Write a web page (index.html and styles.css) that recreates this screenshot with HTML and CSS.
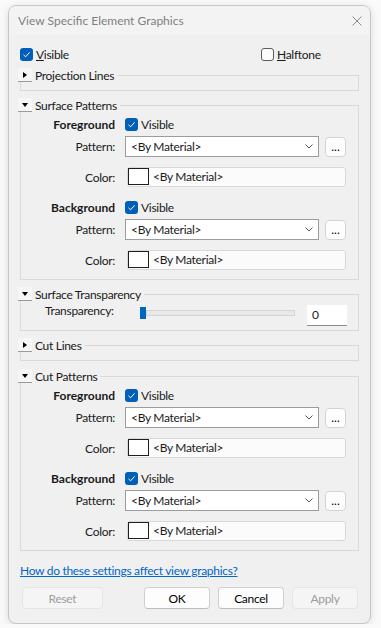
FILE: index.html
```html
<!DOCTYPE html>
<html lang="en">

<head>
    <meta charset="UTF-8">
    <meta name="viewport" content="width=device-width, initial-scale=1.0">
    <title>View Specific Element Graphics</title>
    <link rel="stylesheet" href="styles.css">
</head>

<body>
    <div class="dialog">
        <div class="titlebar">
            <span class="title">View Specific Element Graphics</span>
            <svg class="close" width="10" height="10" viewBox="0 0 10 10">
                <path d="M0.5 0.5 L9.5 9.5 M9.5 0.5 L0.5 9.5" stroke="#8a8a8a" stroke-width="1" fill="none"/>
            </svg>
        </div>

        <div class="dialog-body">
            <!-- Top visibility options -->
            <div class="top-row">
                <label class="check">
                    <span class="box checked"><svg width="13" height="13" viewBox="0 0 13 13"><path d="M3.5 6.8 L5.6 8.8 L9.6 4.3" stroke="#fff" stroke-width="1" fill="none"/></svg></span>
                    <span><u>V</u>isible</span>
                </label>
                <label class="check">
                    <span class="box"></span>
                    <span><u>H</u>alftone</span>
                </label>
            </div>

            <div class="group collapsed first">
                <div class="group-head"><span class="toggle"><span class="tri-right"></span></span>Projection Lines</div>
            </div>

            <div class="group">
                <div class="group-head"><span class="toggle"><span class="tri-down"></span></span>Surface Patterns</div>
                <div class="field-row head-row">
                    <span class="field-label bold">Foreground</span>
                    <label class="check">
                        <span class="box checked"><svg width="13" height="13" viewBox="0 0 13 13"><path d="M3.5 6.8 L5.6 8.8 L9.6 4.3" stroke="#fff" stroke-width="1" fill="none"/></svg></span>
                        <span>Visible</span>
                    </label>
                </div>
                <div class="field-row pattern-row">
                    <span class="field-label">Pattern:</span>
                    <div class="combo"><span>&lt;By Material&gt;</span><svg width="8" height="5" viewBox="0 0 8 5"><path d="M0.5 0.5 L4 4 L7.5 0.5" stroke="#555" stroke-width="1" fill="none"/></svg></div>
                    <button class="dots">...</button>
                </div>
                <div class="field-row color-row">
                    <span class="field-label">Color:</span>
                    <div class="color-field"><span class="swatch"></span><span>&lt;By Material&gt;</span></div>
                </div>
                <div class="field-row head-row second">
                    <span class="field-label bold">Background</span>
                    <label class="check">
                        <span class="box checked"><svg width="13" height="13" viewBox="0 0 13 13"><path d="M3.5 6.8 L5.6 8.8 L9.6 4.3" stroke="#fff" stroke-width="1" fill="none"/></svg></span>
                        <span>Visible</span>
                    </label>
                </div>
                <div class="field-row pattern-row">
                    <span class="field-label">Pattern:</span>
                    <div class="combo"><span>&lt;By Material&gt;</span><svg width="8" height="5" viewBox="0 0 8 5"><path d="M0.5 0.5 L4 4 L7.5 0.5" stroke="#555" stroke-width="1" fill="none"/></svg></div>
                    <button class="dots">...</button>
                </div>
                <div class="field-row color-row">
                    <span class="field-label">Color:</span>
                    <div class="color-field"><span class="swatch"></span><span>&lt;By Material&gt;</span></div>
                </div>
            </div>

            <div class="group transparency">
                <div class="group-head"><span class="toggle"><span class="tri-down"></span></span>Surface Transparency</div>
                <div class="trans-row">
                    <span class="trans-label">Transparency:</span>
                    <div class="slider"><span class="thumb"></span><span class="track"></span></div>
                    <div class="number">0</div>
                </div>
            </div>

            <div class="group collapsed">
                <div class="group-head"><span class="toggle"><span class="tri-right"></span></span>Cut Lines</div>
            </div>

            <div class="group cut">
                <div class="group-head"><span class="toggle"><span class="tri-down"></span></span>Cut Patterns</div>
                <div class="field-row head-row">
                    <span class="field-label bold">Foreground</span>
                    <label class="check">
                        <span class="box checked"><svg width="13" height="13" viewBox="0 0 13 13"><path d="M3.5 6.8 L5.6 8.8 L9.6 4.3" stroke="#fff" stroke-width="1" fill="none"/></svg></span>
                        <span>Visible</span>
                    </label>
                </div>
                <div class="field-row pattern-row">
                    <span class="field-label">Pattern:</span>
                    <div class="combo"><span>&lt;By Material&gt;</span><svg width="8" height="5" viewBox="0 0 8 5"><path d="M0.5 0.5 L4 4 L7.5 0.5" stroke="#555" stroke-width="1" fill="none"/></svg></div>
                    <button class="dots">...</button>
                </div>
                <div class="field-row color-row">
                    <span class="field-label">Color:</span>
                    <div class="color-field"><span class="swatch"></span><span>&lt;By Material&gt;</span></div>
                </div>
                <div class="field-row head-row second">
                    <span class="field-label bold">Background</span>
                    <label class="check">
                        <span class="box checked"><svg width="13" height="13" viewBox="0 0 13 13"><path d="M3.5 6.8 L5.6 8.8 L9.6 4.3" stroke="#fff" stroke-width="1" fill="none"/></svg></span>
                        <span>Visible</span>
                    </label>
                </div>
                <div class="field-row pattern-row">
                    <span class="field-label">Pattern:</span>
                    <div class="combo"><span>&lt;By Material&gt;</span><svg width="8" height="5" viewBox="0 0 8 5"><path d="M0.5 0.5 L4 4 L7.5 0.5" stroke="#555" stroke-width="1" fill="none"/></svg></div>
                    <button class="dots">...</button>
                </div>
                <div class="field-row color-row">
                    <span class="field-label">Color:</span>
                    <div class="color-field"><span class="swatch"></span><span>&lt;By Material&gt;</span></div>
                </div>
            </div>

            <a class="help-link" href="#">How do these settings affect view graphics?</a>

            <div class="button-row">
                <button class="btn disabled reset">Reset</button>
                <button class="btn ok">OK</button>
                <button class="btn">Cancel</button>
                <button class="btn disabled">Apply</button>
            </div>
        </div>
    </div>
</body>

</html>
```

FILE: styles.css
```css
/* Variables */
:root {
    --dialog-bg: #f0f0f0;
    --title-bg: #f3f3f3;
    --text-color: #1a1a1a;
    --group-line: #d9d9d9;
    --accent: #005fb8;
    --link-color: #0066cc;
}

/* Global Styles */
body {
    margin: 0;
    background: #fafafa;
    font-family: Lato, "Noto Sans", sans-serif;
    font-size: 12px;
    color: var(--text-color);
}

.dialog {
    width: 363px;
    height: 619px;
    margin: 5px 0 0 8px;
    box-sizing: border-box;
    border: 1px solid #c6c6c6;
    border-radius: 8px;
    background: var(--dialog-bg);
    box-shadow: 0 2px 9px rgba(0, 0, 0, 0.13);
    overflow: hidden;
    display: flex;
    flex-direction: column;
}

.titlebar {
    height: 29px;
    display: flex;
    align-items: center;
    justify-content: space-between;
    padding: 0 8px 0 9px;
    background: var(--title-bg);
    color: #7f7f7f;
    flex-shrink: 0;
}

.dialog-body {
    padding: 0 11px;
    letter-spacing: -0.3px;
}

/* Checkboxes */
.top-row {
    display: grid;
    grid-template-columns: 241px auto;
    margin-top: 12px;
    height: 13px;
    align-items: center;
}

.check {
    display: flex;
    align-items: center;
    gap: 3px;
}

.box {
    width: 13px;
    height: 13px;
    box-sizing: border-box;
    border: 1px solid #5c5c5c;
    border-radius: 3px;
    background: #fbfbfb;
    display: flex;
}

.box.checked {
    border: none;
    background: var(--accent);
}

/* Group boxes */
.group {
    border: 1px solid var(--group-line);
    margin-top: 14px;
    padding-bottom: 9px;
}

.group.first {
    margin-top: 15px;
}

.group.collapsed {
    padding-bottom: 8px;
}

.group.cut {
    margin-top: 15px;
}

.group-head {
    display: flex;
    align-items: center;
    gap: 3px;
    width: max-content;
    height: 14px;
    margin: -8px 0 0 -3px;
    padding-right: 3px;
    background: var(--dialog-bg);
}

.toggle {
    width: 14px;
    height: 14px;
    box-sizing: border-box;
    border-bottom: 1px solid #9a9a9a;
    background: #f6f6f6;
    display: flex;
    align-items: center;
    justify-content: center;
}

.tri-right {
    border-top: 3.5px solid transparent;
    border-bottom: 3.5px solid transparent;
    border-left: 4px solid #000;
}

.tri-down {
    border-left: 3.5px solid transparent;
    border-right: 3.5px solid transparent;
    border-top: 4px solid #000;
}

/* Field rows */
.field-row {
    display: flex;
    align-items: center;
}

.field-label {
    width: 94px;
    margin-right: 10px;
    text-align: right;
}

.bold {
    font-weight: bold;
    letter-spacing: 0;
}

.head-row {
    height: 18px;
    margin-top: 3px;
}

.head-row.second {
    margin-top: 11px;
}

.pattern-row {
    height: 21px;
    margin-top: 3px;
}

.color-row {
    height: 20px;
    margin-top: 10px;
}

.combo {
    width: 194px;
    height: 21px;
    box-sizing: border-box;
    border: 1px solid #9c9c9c;
    background: #fff;
    display: flex;
    align-items: center;
    justify-content: space-between;
    padding: 0 5px 0 5px;
}

.dots {
    width: 21px;
    height: 20px;
    margin-left: 6px;
    padding: 0 0 3px;
    box-sizing: border-box;
    border: 1px solid #d3d3d3;
    border-radius: 4px;
    background: #fdfdfd;
    font-family: inherit;
    font-size: 12px;
    line-height: 1;
    display: flex;
    align-items: flex-end;
    justify-content: center;
}

.color-field {
    width: 219px;
    height: 20px;
    margin-left: 2px;
    box-sizing: border-box;
    border: 1px solid #d8d8d8;
    border-radius: 3px;
    background: #fbfbfb;
    display: flex;
    align-items: flex-start;
    gap: 4px;
    line-height: 18px;
}

.swatch {
    width: 21px;
    height: 17px;
    box-sizing: border-box;
    border: 1px solid #1f1f1f;
    background: #fff;
}

/* Transparency */
.transparency {
    padding-bottom: 4px;
}

.trans-row {
    display: flex;
    align-items: flex-start;
    margin-top: 4px;
    padding-left: 24px;
}

.trans-label {
    width: 95px;
    line-height: 12px;
}

.slider {
    width: 155px;
    height: 12px;
    margin-top: 2px;
    display: flex;
    align-items: center;
}

.thumb {
    width: 6px;
    height: 12px;
    background: #0067c0;
}

.track {
    flex: 1;
    height: 4px;
    border: 1px solid #d4d4d4;
    background: #e9e9e9;
}

.number {
    width: 40px;
    height: 21px;
    margin-left: 12px;
    box-sizing: border-box;
    border-bottom: 1px solid #8a8a8a;
    background: #fff;
    padding-left: 5px;
    line-height: 20px;
}

/* Footer */
.help-link {
    display: block;
    width: max-content;
    margin-top: 13px;
    line-height: 14px;
    color: var(--link-color);
}

.button-row {
    display: flex;
    gap: 8px;
    margin-top: 9px;
    padding: 0 1px 0 2px;
}

.btn {
    width: 66px;
    height: 22px;
    box-sizing: border-box;
    border: 1px solid #d0d0d0;
    border-bottom-color: #bdbdbd;
    border-radius: 4px;
    background: #fdfdfd;
    font-family: inherit;
    font-size: 12px;
    letter-spacing: -0.3px;
    color: #000;
    padding: 0;
}

.btn.reset {
    width: 81px;
}

.btn.ok {
    margin-left: auto;
}

.btn.disabled {
    background: #f5f5f5;
    border-color: #e5e5e5;
    color: #9d9d9d;
}
```
